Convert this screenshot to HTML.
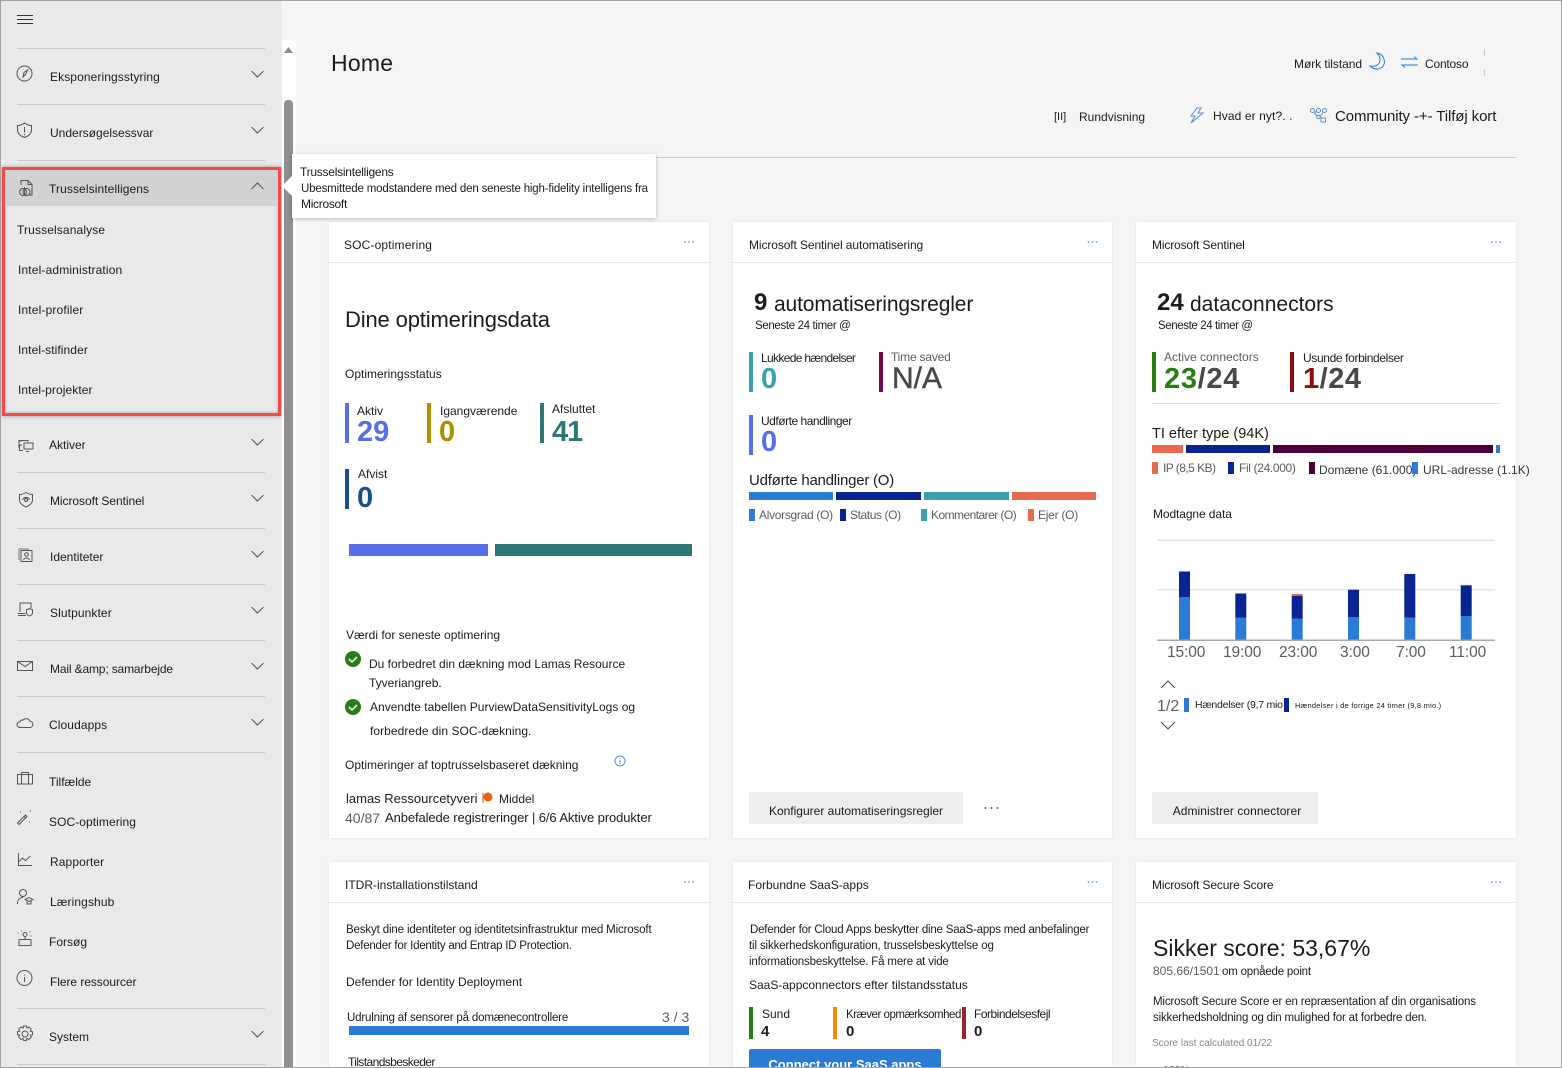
<!DOCTYPE html>
<html lang="da"><head><meta charset="utf-8"><title>Home</title>
<style>
html{margin:0;padding:0;width:1562px;height:1068px;overflow:hidden}
body{margin:0;padding:0;width:1562px;height:1068px;position:relative;overflow:hidden;background:#f5f5f5;font-family:"Liberation Sans",sans-serif;font-size:12px;color:#1b1b1b}
.t{position:absolute;white-space:nowrap;line-height:16px;height:16px}
.s{font-size:11.500px;margin-top:1px}
.r{position:absolute}
aside{position:absolute;left:0;top:0;width:282px;height:1068px;background:#e9e9e9}
.sep{position:absolute;left:17px;width:248px;height:1px;background:#c9c9c9}
.card{position:absolute;background:#fff;box-shadow:0 0 2px rgba(0,0,0,.1)}
.hl{position:absolute;left:0;right:0;top:40px;height:1px;background:#e6e6e6}
.n{position:absolute;white-space:nowrap;font-weight:bold;font-size:29px;line-height:30px}
.g{color:#5c5c5c}
svg{position:absolute;left:0;top:0;overflow:visible}
.btn{position:absolute;background:#ededed;text-align:center;line-height:38px;font-size:12px;height:32px}
</style></head><body>
<aside>
<div class="r" style="left:2px;top:167px;width:273px;height:243px;border:3px solid #f14a4a;box-shadow:0 0 4px rgba(0,0,0,.35), inset 0 0 3px rgba(0,0,0,.3)"></div>
<div class="r" style="left:5px;top:171px;width:273px;height:35px;background:#d2d2d2"></div>
<div class="sep" style="top:48px"></div><div class="sep" style="top:104px"></div><div class="sep" style="top:160px"></div>
<div class="sep" style="top:472px"></div><div class="sep" style="top:528px"></div><div class="sep" style="top:584px"></div><div class="sep" style="top:640px"></div><div class="sep" style="top:696px"></div><div class="sep" style="top:752px"></div><div class="sep" style="top:1008px"></div><div class="sep" style="top:1064px"></div>
<span class="t" style="left:50px;top:69px;letter-spacing:.1px">Eksponeringsstyring</span>
<span class="t" style="left:50px;top:125px">Undersøgelsessvar</span>
<span class="t" style="left:49px;top:181px;letter-spacing:.1px">Trusselsintelligens</span>
<span class="t" style="left:17px;top:222px;letter-spacing:.13px">Trusselsanalyse</span>
<span class="t" style="left:18px;top:262px;letter-spacing:.15px">Intel-administration</span>
<span class="t" style="left:18px;top:302px;letter-spacing:.15px">Intel-profiler</span>
<span class="t" style="left:18px;top:342px;letter-spacing:.08px">Intel-stifinder</span>
<span class="t" style="left:18px;top:382px;letter-spacing:.08px">Intel-projekter</span>
<span class="t" style="left:49px;top:437px">Aktiver</span>
<span class="t" style="left:50px;top:493px;letter-spacing:-.06px">Microsoft Sentinel</span>
<span class="t" style="left:50px;top:549px">Identiteter</span>
<span class="t" style="left:50px;top:605px;letter-spacing:.1px">Slutpunkter</span>
<span class="t" style="left:50px;top:661px;letter-spacing:-.15px">Mail &amp;amp; samarbejde</span>
<span class="t" style="left:49px;top:717px;letter-spacing:.1px">Cloudapps</span>
<span class="t" style="left:49px;top:774px">Tilfælde</span>
<span class="t" style="left:49px;top:814px;letter-spacing:.07px">SOC-optimering</span>
<span class="t" style="left:50px;top:854px;letter-spacing:.1px">Rapporter</span>
<span class="t" style="left:50px;top:894px;letter-spacing:.1px">Læringshub</span>
<span class="t" style="left:49px;top:934px">Forsøg</span>
<span class="t" style="left:50px;top:974px;letter-spacing:-.06px">Flere ressourcer</span>
<span class="t" style="left:49px;top:1029px">System</span>
<svg width="282" height="1068" fill="none" stroke="#555" stroke-width="1">
<path stroke="#333" d="M17 15.500h16M17 19.500h16M17 23.500h16"/>
<path d="M251.500 71l6 6 6-6M251.500 127l6 6 6-6M251.500 189l6-6 6 6M251.500 439l6 6 6-6M251.500 495l6 6 6-6M251.500 551l6 6 6-6M251.500 607l6 6 6-6M251.500 663l6 6 6-6M251.500 719l6 6 6-6M251.500 1031l6 6 6-6"/>
<circle cx="24.500" cy="73.500" r="7.500"/><path d="M27.500 70l-2 4.500-2.500 2.500 1-4.500z"/>
<path d="M24.500 123c2 1.500 4.500 2.500 7 2.500v4.500c0 3.500-3 6-7 7.500-4-1.500-7-4-7-7.500v-4.500c2.500 0 5-1 7-2.500zM24.500 127v5.500M24.500 134v1.200"/>
<path d="M21 185v-4.500h7l4 4v10.500h-4M28 180.500v4h4"/><circle cx="23" cy="192" r="3.500"/><circle cx="26.500" cy="192" r="3.500"/><path d="M24.500 187v8"/>
<path d="M19 448v-7.500h9v1.500M22 441h-3M24 443h9v6h-9zM22 445h-2.500v5.500h3.500M26 451.500h3"/>
<path d="M26 492.500c2 1.300 4.500 2 6.500 2v5.500c0 3.500-3 5.500-6.500 7-3.500-1.500-6.500-3.500-6.500-7v-5.500c2 0 4.500-.7 6.500-2z"/><circle cx="26" cy="500" r="1.500"/><path d="M22.500 500c1.500-3.500 5.500-3.500 7 0"/>
<path stroke="#777" d="M19 549h10M19 549v11"/><rect x="21" y="550.500" width="11" height="11"/><circle cx="26.500" cy="554.500" r="1.800"/><path d="M23.500 560c.5-2.500 5.500-2.500 6 0"/>
<path d="M20 612v-9h11v5M17.500 613.500h8M18 615.500h8"/><path d="M29.500 608.500c1 .7 2 1 3 1v3c0 1.800-1.500 3-3 3.500-1.500-.5-3-1.700-3-3.500v-3c1 0 2-.3 3-1z"/>
<rect x="17.500" y="661.500" width="15" height="9"/><path d="M17.500 661.500l7.500 5 7.500-5"/>
<path d="M21 727.500h8.500a3 3 0 0 0 .5-6.300c-1-2.700-5-3.500-7-1-1.500-.5-3 .5-3 1.700a3 3 0 0 0-3 2.800c0 1.500 1.500 2.800 4 2.800z"/>
<rect x="17.500" y="774.500" width="15" height="9.500"/><path d="M21.500 774.500v9.500M28.500 774.500v9.500M21.500 774.500v-2h7v2"/>
<path d="M17.500 823l8-8 1.500 1.500-8 8zM24 816.500l1.500 1.500"/><path stroke-dasharray="1 3" d="M20 812h1M30 811h1M29 822h1"/>
<path d="M18.500 853v12.500h13.500M18.500 862l4-4 3 2.500 5-4.500"/>
<circle cx="23" cy="893" r="3.500"/><path d="M17.500 904c0-4 2-6.500 5.500-6.500M25 899.500l4-2 4 2-4 2zM27 901v3h4v-3"/>
<path d="M19 939.500h12M19 939.500v6h12v-6M25 939v-2"/><circle cx="25" cy="934.500" r="2"/><path stroke-dasharray="1 3" d="M17.500 933h1M21 931h1M29.500 932h2M30.500 936h1"/>
<circle cx="24.500" cy="978" r="7.500"/><path d="M24.500 977v5M24.500 974.500v1"/>
<circle cx="25" cy="1034" r="3"/><path d="M23.500 1026h3l.5 2 2-1 2.300 2.200-1 2 2.200.5v3l-2.200.5 1 2-2.300 2.200-2-1-.5 2h-3l-.5-2-2 1-2.300-2.200 1-2-2.200-.5v-3l2.200-.5-1-2L21 1027l2 1z"/>
</svg>
</aside>
<div class="r" style="left:282px;top:40px;width:14px;height:1028px;background:#fff"></div>
<div class="r" style="left:284px;top:100px;width:9px;height:968px;background:#8f8f8f;border-radius:4px 4px 0 0"></div>
<svg width="300" height="60"><path d="M284 53l4.500-6 4.500 6z" fill="#8f8f8f"/></svg>

<header>
<span class="t" style="left:331px;top:51px;font-size:23px;line-height:24px;height:24px;letter-spacing:.25px">Home</span>
<span class="t" style="left:1294px;top:56px;letter-spacing:-.05px">Mørk tilstand</span>
<span class="t" style="left:1425px;top:56px;letter-spacing:-.2px">Contoso</span>
<span class="t" style="left:1054px;top:109px;font-size:11px">[II]</span>
<span class="t" style="left:1079px;top:109px">Rundvisning</span>
<span class="t" style="left:1213px;top:108px;letter-spacing:.1px">Hvad er nyt?. .</span>
<span class="t" style="left:1335px;top:109px;font-size:15px;letter-spacing:-.1px">Community -+- Tilføj kort</span>
<svg width="1562" height="160" fill="none" stroke="#2b7bd6" stroke-width="1">
<path d="M1377 53c7 1 9 9 6 13s-9 4-13 0c5 1 10-1 10-6 0-3-1-5-3-7z"/>
<path d="M1401 59h16l-3-2.500M1418 65h-16l3 2.500"/>
<path stroke="#5b8fc9" d="M1197 108l-6 8h4l-4 7 12-10h-5l3-5z"/>
<path stroke="#5b8fc9" d="M1314 112.500l3.500 4M1323 112.500l-3 4M1315 112l2 0"/><circle stroke="#5b8fc9" cx="1312.500" cy="110.500" r="2"/><circle stroke="#5b8fc9" cx="1318.500" cy="110.500" r="2"/><circle stroke="#5b8fc9" cx="1324.500" cy="110.500" r="2"/><circle stroke="#5b8fc9" cx="1318.500" cy="117" r="1.800"/><rect stroke="#5b8fc9" x="1321" y="118" width="4.500" height="4"/>
<path stroke="#c9c9c9" d="M1484.500 49v7M1484.500 69v7"/>
</svg>
</header>
<div class="r" style="left:298px;top:157px;width:1218px;height:1px;background:#c9c9c9"></div>

<section class="card" style="left:329px;top:222px;width:380px;height:616px"><div class="hl"></div></section>
<section class="card" style="left:733px;top:222px;width:379px;height:616px"><div class="hl"></div></section>
<section class="card" style="left:1136px;top:222px;width:380px;height:616px"><div class="hl"></div></section>
<section class="card" style="left:329px;top:862px;width:380px;height:206px"><div class="hl"></div></section>
<section class="card" style="left:733px;top:862px;width:379px;height:206px"><div class="hl"></div></section>
<section class="card" style="left:1136px;top:862px;width:380px;height:206px"><div class="hl"></div></section>

<div class="r" style="left:292px;top:154px;width:364px;height:64px;background:#fff;box-shadow:0 1px 4px rgba(0,0,0,.25)"></div>
<svg width="300" height="220"><path d="M292 176l-10 10 10 10z" fill="#fff"/></svg>
<span class="t" style="left:300px;top:164px;letter-spacing:-.25px">Trusselsintelligens</span>
<span class="t s" style="left:301px;top:180px;letter-spacing:-.17px">Ubesmittede modstandere med den seneste high-fidelity intelligens fra</span>
<span class="t" style="left:301px;top:196px;letter-spacing:-.3px">Microsoft</span>

<svg width="1562" height="1068" fill="#8ab2e2"><circle cx="685" cy="242" r="1"/><circle cx="689" cy="242" r="1"/><circle cx="693" cy="242" r="1"/><circle cx="1088.500" cy="242" r="1"/><circle cx="1092.500" cy="242" r="1"/><circle cx="1096.500" cy="242" r="1"/><circle cx="1492" cy="242" r="1"/><circle cx="1496" cy="242" r="1"/><circle cx="1500" cy="242" r="1"/><circle cx="685" cy="882" r="1"/><circle cx="689" cy="882" r="1"/><circle cx="693" cy="882" r="1"/><circle cx="1088.500" cy="882" r="1"/><circle cx="1092.500" cy="882" r="1"/><circle cx="1096.500" cy="882" r="1"/><circle cx="1492" cy="882" r="1"/><circle cx="1496" cy="882" r="1"/><circle cx="1500" cy="882" r="1"/>
<circle cx="985.500" cy="808" r="1" fill="#2b7bd6"/><circle cx="991.500" cy="808" r="1" fill="#2b7bd6"/><circle cx="997.500" cy="808" r="1" fill="#2b7bd6"/></svg>

<!-- Card 1 -->
<span class="t" style="left:344px;top:237px;letter-spacing:.15px">SOC-optimering</span>
<span class="t" style="left:345px;top:306px;font-size:22px;line-height:28px;height:28px;letter-spacing:-.15px">Dine optimeringsdata</span>
<span class="t" style="left:345px;top:366px">Optimeringsstatus</span>
<div class="r" style="left:345px;top:403px;width:4px;height:40px;background:#586ee8"></div>
<span class="t" style="left:357px;top:403px">Aktiv</span><span class="n" style="left:357px;top:417px;color:#586ee8">29</span>
<div class="r" style="left:427px;top:403px;width:4px;height:40px;background:#b08c00"></div>
<span class="t" style="left:440px;top:403px">Igangværende</span><span class="n" style="left:439px;top:417px;color:#b08c00">0</span>
<div class="r" style="left:540px;top:403px;width:4px;height:40px;background:#2d7776"></div>
<span class="t" style="left:552px;top:401px">Afsluttet</span><span class="n" style="left:552px;top:417px;color:#2d7776;letter-spacing:-1px">41</span>
<div class="r" style="left:345px;top:469px;width:4px;height:40px;background:#174f87"></div>
<span class="t" style="left:358px;top:466px">Afvist</span><span class="n" style="left:357px;top:483px;color:#174f87">0</span>
<div class="r" style="left:349px;top:544px;width:139px;height:12px;background:#586ee8"></div>
<div class="r" style="left:495px;top:544px;width:197px;height:12px;background:#2d7776"></div>
<span class="t" style="left:346px;top:627px">Værdi for seneste optimering</span>
<svg width="700" height="800"><circle cx="353" cy="659" r="8" fill="#2a7d12"/><path d="M349 659l3 3 5-5" fill="none" stroke="#fff" stroke-width="1.500"/><circle cx="353" cy="707" r="8" fill="#2a7d12"/><path d="M349 707l3 3 5-5" fill="none" stroke="#fff" stroke-width="1.500"/><circle cx="620" cy="761" r="5" fill="none" stroke="#5b8fc9"/><path d="M620 760v4M620 758v1" stroke="#5b8fc9"/><path d="M483 793v10" stroke="#c85a10"/><circle cx="488" cy="797" r="4.500" fill="#e8650e"/></svg>
<span class="t" style="left:369px;top:656px">Du forbedret din dækning mod Lamas Resource</span>
<span class="t" style="left:369px;top:675px">Tyveriangreb.</span>
<span class="t" style="left:370px;top:699px;letter-spacing:.02px">Anvendte tabellen PurviewDataSensitivityLogs og</span>
<span class="t" style="left:370px;top:723px;letter-spacing:.05px">forbedrede din SOC-dækning.</span>
<span class="t" style="left:345px;top:757px">Optimeringer af toptrusselsbaseret dækning</span>
<span class="t" style="left:346px;top:791px;font-size:13px">lamas Ressourcetyveri</span>
<span class="t" style="left:499px;top:791px">Middel</span>
<span class="t g" style="left:345px;top:810px;font-size:14px">40/87</span>
<span class="t" style="left:385px;top:810px;font-size:13px;letter-spacing:-.1px">Anbefalede registreringer | 6/6 Aktive produkter</span>

<!-- Card 2 -->
<span class="t" style="left:749px;top:237px;letter-spacing:-.1px">Microsoft Sentinel automatisering</span>
<b class="t" style="left:754px;top:289px;font-size:24px;line-height:28px;height:28px">9</b>
<span class="t" style="left:774px;top:291px;font-size:21px;line-height:28px;height:28px;letter-spacing:-.13px">automatiseringsregler</span>
<span class="t" style="left:755px;top:318px;font-size:11.500px;letter-spacing:-.35px">Seneste 24 timer @</span>
<div class="r" style="left:749px;top:352px;width:4px;height:40px;background:#3aa0ae"></div>
<span class="t" style="left:761px;top:350px;letter-spacing:-.66px">Lukkede hændelser</span><span class="n" style="left:761px;top:364px;color:#3aa0ae">0</span>
<div class="r" style="left:879px;top:352px;width:4px;height:40px;background:#74094f"></div>
<span class="t g" style="left:891px;top:349px;letter-spacing:-.2px">Time saved</span><span class="n" style="left:892px;top:364px;color:#484848;font-weight:normal;-webkit-text-stroke:.4px #484848;font-size:30px">N/A</span>
<div class="r" style="left:749px;top:415px;width:4px;height:40px;background:#586ee8"></div>
<span class="t" style="left:761px;top:413px;letter-spacing:-.48px">Udførte handlinger</span><span class="n" style="left:761px;top:427px;color:#586ee8">0</span>
<span class="t" style="left:749px;top:473px;font-size:15px;letter-spacing:-.23px">Udførte handlinger (O)</span>
<div class="r" style="left:749px;top:492px;width:84px;height:8px;background:#2b7bd6"></div>
<div class="r" style="left:836px;top:492px;width:85px;height:8px;background:#0a2491"></div>
<div class="r" style="left:924px;top:492px;width:85px;height:8px;background:#3aa0ae"></div>
<div class="r" style="left:1012px;top:492px;width:84px;height:8px;background:#e8694f"></div>
<div class="r" style="left:749px;top:509px;width:6px;height:12px;background:#2b7bd6"></div><span class="t g" style="left:759px;top:507px;letter-spacing:-.3px">Alvorsgrad (O)</span>
<div class="r" style="left:840px;top:509px;width:6px;height:12px;background:#0a2491"></div><span class="t g" style="left:850px;top:507px;letter-spacing:-.4px">Status (O)</span>
<div class="r" style="left:921px;top:509px;width:6px;height:12px;background:#3aa0ae"></div><span class="t g" style="left:931px;top:507px;letter-spacing:-.55px">Kommentarer (O)</span>
<div class="r" style="left:1028px;top:509px;width:6px;height:12px;background:#e8694f"></div><span class="t g" style="left:1038px;top:507px;letter-spacing:-.25px">Ejer (O)</span>
<div class="btn" style="left:749px;top:792px;width:214px">Konfigurer automatiseringsregler</div>

<!-- Card 3 -->
<span class="t" style="left:1152px;top:237px;letter-spacing:-.15px">Microsoft Sentinel</span>
<b class="t" style="left:1157px;top:289px;font-size:24px;line-height:28px;height:28px">24</b>
<span class="t" style="left:1190px;top:291px;font-size:21px;line-height:28px;height:28px">dataconnectors</span>
<span class="t" style="left:1158px;top:318px;font-size:11.500px;letter-spacing:-.4px">Seneste 24 timer @</span>
<div class="r" style="left:1152px;top:352px;width:4px;height:40px;background:#2a7d12"></div>
<span class="t g" style="left:1164px;top:349px">Active connectors</span>
<span class="n" style="left:1164px;top:364px;color:#484848;letter-spacing:.7px"><span style="color:#2a7d12">23</span>/24</span>
<div class="r" style="left:1290px;top:352px;width:4px;height:40px;background:#8f0a0a"></div>
<span class="t" style="left:1303px;top:350px;letter-spacing:-.36px">Usunde forbindelser</span>
<span class="n" style="left:1303px;top:364px;color:#484848;letter-spacing:.5px"><span style="color:#8f0a0a">1</span>/24</span>
<div class="r" style="left:1152px;top:403px;width:348px;height:1px;background:#e2e2e2"></div>
<span class="t" style="left:1152px;top:426px;font-size:14.500px">TI efter type (94K)</span>
<div class="r" style="left:1152px;top:445px;width:31px;height:8px;background:#e8694f"></div>
<div class="r" style="left:1186px;top:445px;width:84px;height:8px;background:#0a2491"></div>
<div class="r" style="left:1273px;top:445px;width:220px;height:8px;background:#4a0036"></div>
<div class="r" style="left:1496px;top:445px;width:4px;height:8px;background:#2b7bd6"></div>
<div class="r" style="left:1152px;top:462px;width:6px;height:12px;background:#e8694f"></div><span class="t g" style="left:1163px;top:460px;letter-spacing:-.55px">IP (8,5 KB)</span>
<div class="r" style="left:1228px;top:462px;width:6px;height:12px;background:#0a2491"></div><span class="t g" style="left:1239px;top:460px;letter-spacing:-.35px">Fil (24.000)</span>
<div class="r" style="left:1309px;top:462px;width:6px;height:12px;background:#4a0036"></div><span class="t g" style="left:1319px;top:462px;color:#333">Domæne (61.000)</span>
<div class="r" style="left:1412px;top:462px;width:6px;height:12px;background:#2b7bd6"></div><span class="t g" style="left:1423px;top:462px;color:#333">URL-adresse (1.1K)</span>
<span class="t" style="left:1153px;top:506px;letter-spacing:-.1px">Modtagne data</span>
<svg width="1562" height="760">
<rect x="1157" y="539.500" width="338" height="1.500" fill="#e6e6e6"/><rect x="1157" y="589" width="338" height="1.500" fill="#e6e6e6"/>
<g fill="#2b7bd6"><rect x="1179" y="597" width="11" height="43"/><rect x="1235.300" y="617.500" width="11" height="22.500"/><rect x="1291.700" y="618.500" width="11" height="21.500"/><rect x="1348" y="617" width="11" height="23"/><rect x="1404.300" y="617.700" width="11" height="22.300"/><rect x="1460.700" y="616" width="11" height="24"/></g>
<g fill="#0a2491"><rect x="1179" y="571.500" width="11" height="25.500"/><rect x="1235.300" y="593.500" width="11" height="24"/><rect x="1291.700" y="595.700" width="11" height="22.800"/><rect x="1348" y="589.700" width="11" height="27.300"/><rect x="1404.300" y="574" width="11" height="43.700"/><rect x="1460.700" y="585.300" width="11" height="30.700"/></g>
<rect x="1291.700" y="594" width="11" height="1.700" fill="#e8694f"/>
<rect x="1157" y="639.500" width="338" height="1.500" fill="#a9a9a9"/>
<path d="M1161 688l7-7 7 7M1161 722l7 7 7-7" fill="none" stroke="#444"/>
<rect x="1184" y="698" width="5" height="14" fill="#2b7bd6"/><rect x="1284" y="698" width="5" height="14" fill="#0a2491"/>
</svg>
<span class="t g" style="left:1167px;top:645px;font-size:15.500px;letter-spacing:-.1px">15:00</span>
<span class="t g" style="left:1223px;top:645px;font-size:15.500px;letter-spacing:-.1px">19:00</span>
<span class="t g" style="left:1279px;top:645px;font-size:15.500px;letter-spacing:-.1px">23:00</span>
<span class="t g" style="left:1340px;top:645px;font-size:15.500px;letter-spacing:-.1px">3:00</span>
<span class="t g" style="left:1396px;top:645px;font-size:15.500px;letter-spacing:-.1px">7:00</span>
<span class="t g" style="left:1449px;top:645px;font-size:15.500px;letter-spacing:-.1px">11:00</span>
<span class="t g" style="left:1157px;top:699px;font-size:16px">1/2</span>
<span class="t" style="left:1195px;top:697px;font-size:10.500px;letter-spacing:-.25px">Hændelser (9,7 mio</span>
<span class="t" style="left:1295px;top:698px;font-size:7.500px;letter-spacing:.22px">Hændelser i de forrige 24 timer (9,8 mio.)</span>
<div class="btn" style="left:1152px;top:792px;width:166px;letter-spacing:.05px;text-indent:4px">Administrer connectorer</div>

<!-- ITDR -->
<span class="t" style="left:345px;top:877px">ITDR-installationstilstand</span>
<span class="t s" style="left:346px;top:921px;letter-spacing:-.14px">Beskyt dine identiteter og identitetsinfrastruktur med Microsoft</span>
<span class="t s" style="left:346px;top:937px;letter-spacing:-.23px">Defender for Identity and Entrap ID Protection.</span>
<span class="t" style="left:346px;top:974px">Defender for Identity Deployment</span>
<span class="t s" style="left:347px;top:1009px;letter-spacing:-.17px">Udrulning af sensorer på domænecontrollere</span>
<span class="t g" style="left:662px;top:1009px;font-size:14px">3 / 3</span>
<div class="r" style="left:349px;top:1026px;width:340px;height:9px;background:#2b7bd6"></div>
<span class="t" style="left:348px;top:1054px;letter-spacing:-.6px">Tilstandsbeskeder</span>

<!-- SaaS -->
<span class="t" style="left:748px;top:877px">Forbundne SaaS-apps</span>
<span class="t s" style="left:750px;top:921px;letter-spacing:-.21px">Defender for Cloud Apps beskytter dine SaaS-apps med anbefalinger</span>
<span class="t s" style="left:749px;top:937px;letter-spacing:-.14px">til sikkerhedskonfiguration, trusselsbeskyttelse og</span>
<span class="t s" style="left:749px;top:953px;letter-spacing:-.17px">informationsbeskyttelse. Få mere at vide</span>
<span class="t" style="left:749px;top:977px">SaaS-appconnectors efter tilstandsstatus</span>
<div class="r" style="left:749px;top:1007px;width:4px;height:32px;background:#2a7d12"></div>
<div class="r" style="left:833px;top:1007px;width:4px;height:32px;background:#f28c0f"></div>
<div class="r" style="left:962px;top:1007px;width:4px;height:32px;background:#9a2530"></div>
<span class="t" style="left:762px;top:1006px">Sund</span>
<span class="t s" style="left:846px;top:1006px;letter-spacing:-.48px">Kræver opmærksomhed</span>
<span class="t" style="left:974px;top:1006px;letter-spacing:-.5px">Forbindelsesfejl</span>
<b class="t" style="left:761px;top:1024px;font-size:15px">4</b><b class="t" style="left:846px;top:1024px;font-size:15px">0</b><b class="t" style="left:974px;top:1024px;font-size:15px">0</b>
<div class="r" style="left:749px;top:1049px;width:192px;height:19px;background:#2b7bd6;border-radius:2px 2px 0 0;color:#fff;text-align:center;font-weight:bold;font-size:13px;line-height:32px;overflow:hidden">Connect your SaaS apps</div>

<!-- Secure score -->
<span class="t" style="left:1152px;top:877px;letter-spacing:-.15px">Microsoft Secure Score</span>
<span class="t" style="left:1153px;top:934px;font-size:23px;line-height:28px;height:28px">Sikker score: 53,67%</span>
<span class="t g" style="left:1153px;top:963px">805.66/1501</span>
<span class="t s" style="left:1222px;top:963px;letter-spacing:-.2px">om opnåede point</span>
<span class="t s" style="left:1153px;top:993px;letter-spacing:-.15px">Microsoft Secure Score er en repræsentation af din organisations</span>
<span class="t s" style="left:1153px;top:1009px;letter-spacing:-.18px">sikkerhedsholdning og din mulighed for at forbedre den.</span>
<span class="t" style="left:1152px;top:1036px;font-size:10px;color:#888">Score last calculated 01/22</span>
<span class="t g" style="left:1163px;top:1062px;font-size:10.500px">100%</span>

<div class="r" style="left:0;top:0;width:1560px;height:1066px;border:1px solid #a3a3a3"></div>
</body></html>
